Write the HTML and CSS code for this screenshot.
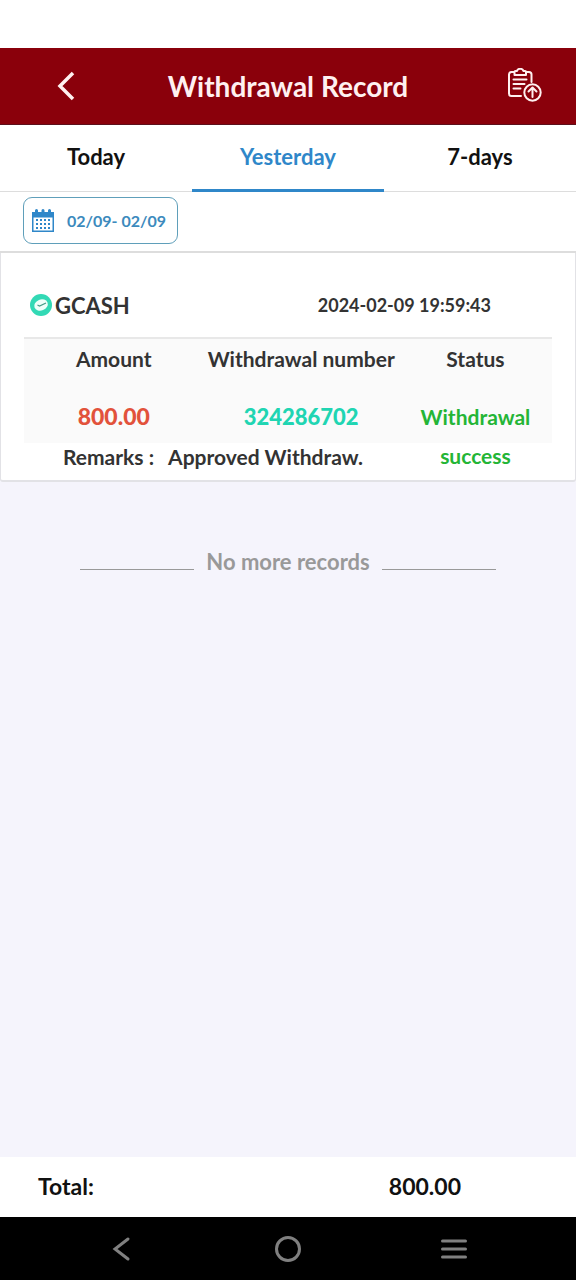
FILE: index.html
```html
<!DOCTYPE html>
<html lang="en">
<head>
<meta charset="utf-8">
<meta name="viewport" content="width=device-width, initial-scale=1">
<title>Withdrawal Record</title>
<link rel="stylesheet" href="styles.css">
</head>
<body>
<header class="topbar">
  <button class="icon-button" type="button" aria-label="Back">
    <svg width="20" height="32" viewBox="0 0 20 32" fill="none" stroke="currentColor" stroke-width="3.500"><path d="M17 3 4 16l13 13"/></svg>
  </button>
  <h1 class="title">Withdrawal Record</h1>
  <button class="icon-button" type="button" aria-label="Submit record">
    <svg width="36" height="36" viewBox="0 0 36 36" fill="none" stroke="currentColor" stroke-width="2" stroke-linecap="round" stroke-linejoin="round">
      <path d="M8 4H5.500Q3 4 3 6.500V25.500Q3 28 5.500 28H15M20 4h3q2.500 0 2.500 2.500V14"/>
      <path d="M8.500 7V4q0-1 1-1H11q.5-2.200 3.200-2.200t3.200 2.200h1.600q1 0 1 1v3z"/>
      <path d="M7.500 11.500h13M7.500 16h11M7.500 20.500h7"/>
      <circle cx="26.500" cy="24.500" r="8.200"/>
      <path d="M26.500 29v-9M22.500 23.500l4-4 4 4"/>
    </svg>
  </button>
</header>
<nav class="tabs">
  <button class="tab" type="button">Today</button>
  <button class="tab tab-active" type="button" aria-current="true">Yesterday</button>
  <button class="tab" type="button">7-days</button>
</nav>
<div class="filter">
  <button class="date-range" type="button">
    <svg width="22" height="24" viewBox="0 0 22 24">
      <path fill="#2f87c9" d="M0 3h3V1.500Q3 0 4.500 0T6 1.500V3h3.500V1.500q0-1.500 1.500-1.500t1.500 1.500V3H16V1.500Q16 0 17.500 0T19 1.500V3h3v20H0z"/>
      <path fill="#fff" d="M1.500 8.500h19V21.500h-19z"/>
      <path stroke="#2f87c9" stroke-width="2" stroke-dasharray="2 2" d="M4 11h14.500M4 15h14.500M4 19h14.500"/>
    </svg>
    <span>02/09- 02/09</span>
  </button>
</div>
<main class="records">
  <article class="card">
    <div class="card-head">
      <h2 class="method">
        <svg width="24" height="24" viewBox="0 0 24 24"><circle cx="12" cy="12" r="11" fill="#32d9b5"/><ellipse cx="12" cy="12" rx="7" ry="5.500" fill="#effffa" transform="rotate(-22 12 12)"/><path d="m8.500 12 2 1L17 10" fill="none" stroke="#459b87" stroke-width="1.200"/></svg>
        <span>GCASH</span>
      </h2>
      <time class="time" datetime="2024-02-09T19:59:43">2024-02-09 19:59:43</time>
    </div>
    <table class="details">
      <colgroup><col class="col-amount"><col class="col-number"><col class="col-status"></colgroup>
      <thead>
        <tr><th scope="col">Amount</th><th scope="col">Withdrawal number</th><th scope="col">Status</th></tr>
      </thead>
      <tbody>
        <tr><td class="value amount">800.00</td><td class="value number">324286702</td><td class="status" rowspan="2">Withdrawal success</td></tr>
        <tr><td class="remarks" colspan="2"><div class="remarks-line"><span>Remarks :</span><span>Approved Withdraw.</span></div></td></tr>
      </tbody>
    </table>
  </article>
  <p class="end">No more records</p>
</main>
<footer class="total"><span>Total:</span><span class="total-value">800.00</span></footer>
<nav class="system-nav" aria-label="System">
  <button class="system-button" type="button" aria-label="Back"><svg width="28" height="28" viewBox="0 0 28 28" fill="none" stroke="currentColor" stroke-width="3" stroke-linecap="round"><path d="M20 4 7 14l13 10"/></svg></button>
  <button class="system-button" type="button" aria-label="Home"><svg width="28" height="28" viewBox="0 0 28 28" fill="none" stroke="currentColor" stroke-width="3"><circle cx="14" cy="14" r="11.500"/></svg></button>
  <button class="system-button" type="button" aria-label="Menu"><svg width="28" height="28" viewBox="0 0 28 28" fill="none" stroke="currentColor" stroke-width="3" stroke-linecap="round"><path d="M2.500 6h23M2.500 14h23M2.500 22h23"/></svg></button>
</nav>
</body>
</html>
```
FILE: styles.css
```css
* {
  box-sizing: border-box;
}

body {
  display: flex;
  flex-direction: column;
  min-height: 100vh;
  margin: 0;
  padding-top: 48px;
  background: #fff;
  color: #333;
  font-family: Lato, "Open Sans", sans-serif;
  font-size: 22px;
  font-weight: 700;
}

button {
  padding: 0;
  border: 0;
  background: none;
  color: inherit;
  font: inherit;
}

svg {
  display: block;
  flex: none;
}

h1, h2, p {
  margin: 0;
}

.topbar {
  display: grid;
  grid-template-columns: 132px 1fr 104px;
  align-items: center;
  height: 77px;
  border-bottom: 1px solid #5d101b;
  background: #8a000b;
  color: #fff0f0;
}

.icon-button {
  display: grid;
  place-items: center;
  height: 76px;
}

.title {
  padding-right: 28px;
  font-size: 28px;
  line-height: 36px;
  text-align: center;
  white-space: nowrap;
}

.tabs {
  display: grid;
  grid-template-columns: repeat(3, 1fr);
  height: 67px;
  border-bottom: 1px solid #ddd;
  color: #111;
}

.tab {
  height: 67px;
  padding-bottom: 2px;
  border-bottom: 3px solid transparent;
}

.tab-active {
  border-bottom-color: #2f87c9;
  color: #2f87c9;
}

.filter {
  padding: 5px 23px 7px;
  border-bottom: 2px solid #ddd;
}

.date-range {
  display: flex;
  align-items: center;
  gap: 13px;
  height: 47px;
  padding: 0 11px 0 8px;
  border: 1px solid #5f9fba;
  border-radius: 9px;
  color: #3c8abd;
  font-size: 16px;
}

.records {
  flex: 1;
  background: #f5f4fc;
}

.card {
  padding: 0 23px;
  border: 1px solid #e2e2e6;
  border-top: 0;
  border-bottom-width: 2px;
  border-radius: 0 0 3px 3px;
  background: #fff;
}

.card-head {
  display: flex;
  align-items: center;
  justify-content: space-between;
  height: 84px;
  padding: 20px 61px 0 5px;
}

.method {
  display: flex;
  align-items: center;
  gap: 2px;
  font-size: 22px;
}

.time {
  font-size: 18px;
}

.details {
  width: 100%;
  border-top: 2px solid #e8e8e8;
  border-spacing: 0;
  table-layout: fixed;
  font-size: 21px;
  line-height: 39px;
  text-align: center;
}

.details th,
.details td {
  padding: 0;
}

.details th,
.value {
  background: #fafafa;
}

.details th {
  white-space: nowrap;
}

.col-amount {
  width: 34%;
}

.col-number {
  width: 37%;
}

.col-status {
  width: 29%;
}

.details .value {
  padding: 19px 0 7px;
  font-weight: 900;
}

.amount {
  color: #e2523b;
  font-size: 23px;
}

.number {
  color: #20d5b2;
  font-size: 22px;
}

.details .status {
  padding: 19px 16px 0;
  background: linear-gradient(#fafafa 65px, #fff 0);
  color: #24b536;
  vertical-align: top;
}

.remarks-line {
  display: flex;
  gap: 14px;
  padding: 0 0 9px 39px;
  line-height: 28px;
  white-space: nowrap;
}

.end {
  display: flex;
  gap: 12px;
  padding: 65px 80px;
  color: #999;
  font-size: 22px;
  line-height: 30px;
}

.end::before,
.end::after {
  content: "";
  flex: 1;
  height: 22px;
  border-bottom: 1px solid #999;
}

.total {
  display: flex;
  align-items: center;
  justify-content: space-between;
  height: 60px;
  padding: 0 115px 2px 38px;
  color: #111;
  font-size: 23px;
}

.system-nav {
  display: grid;
  grid-template-columns: repeat(3, 166px);
  justify-content: center;
  height: 63px;
  background: #000;
  color: #808080;
}

.system-button {
  display: grid;
  place-items: center;
}
```
